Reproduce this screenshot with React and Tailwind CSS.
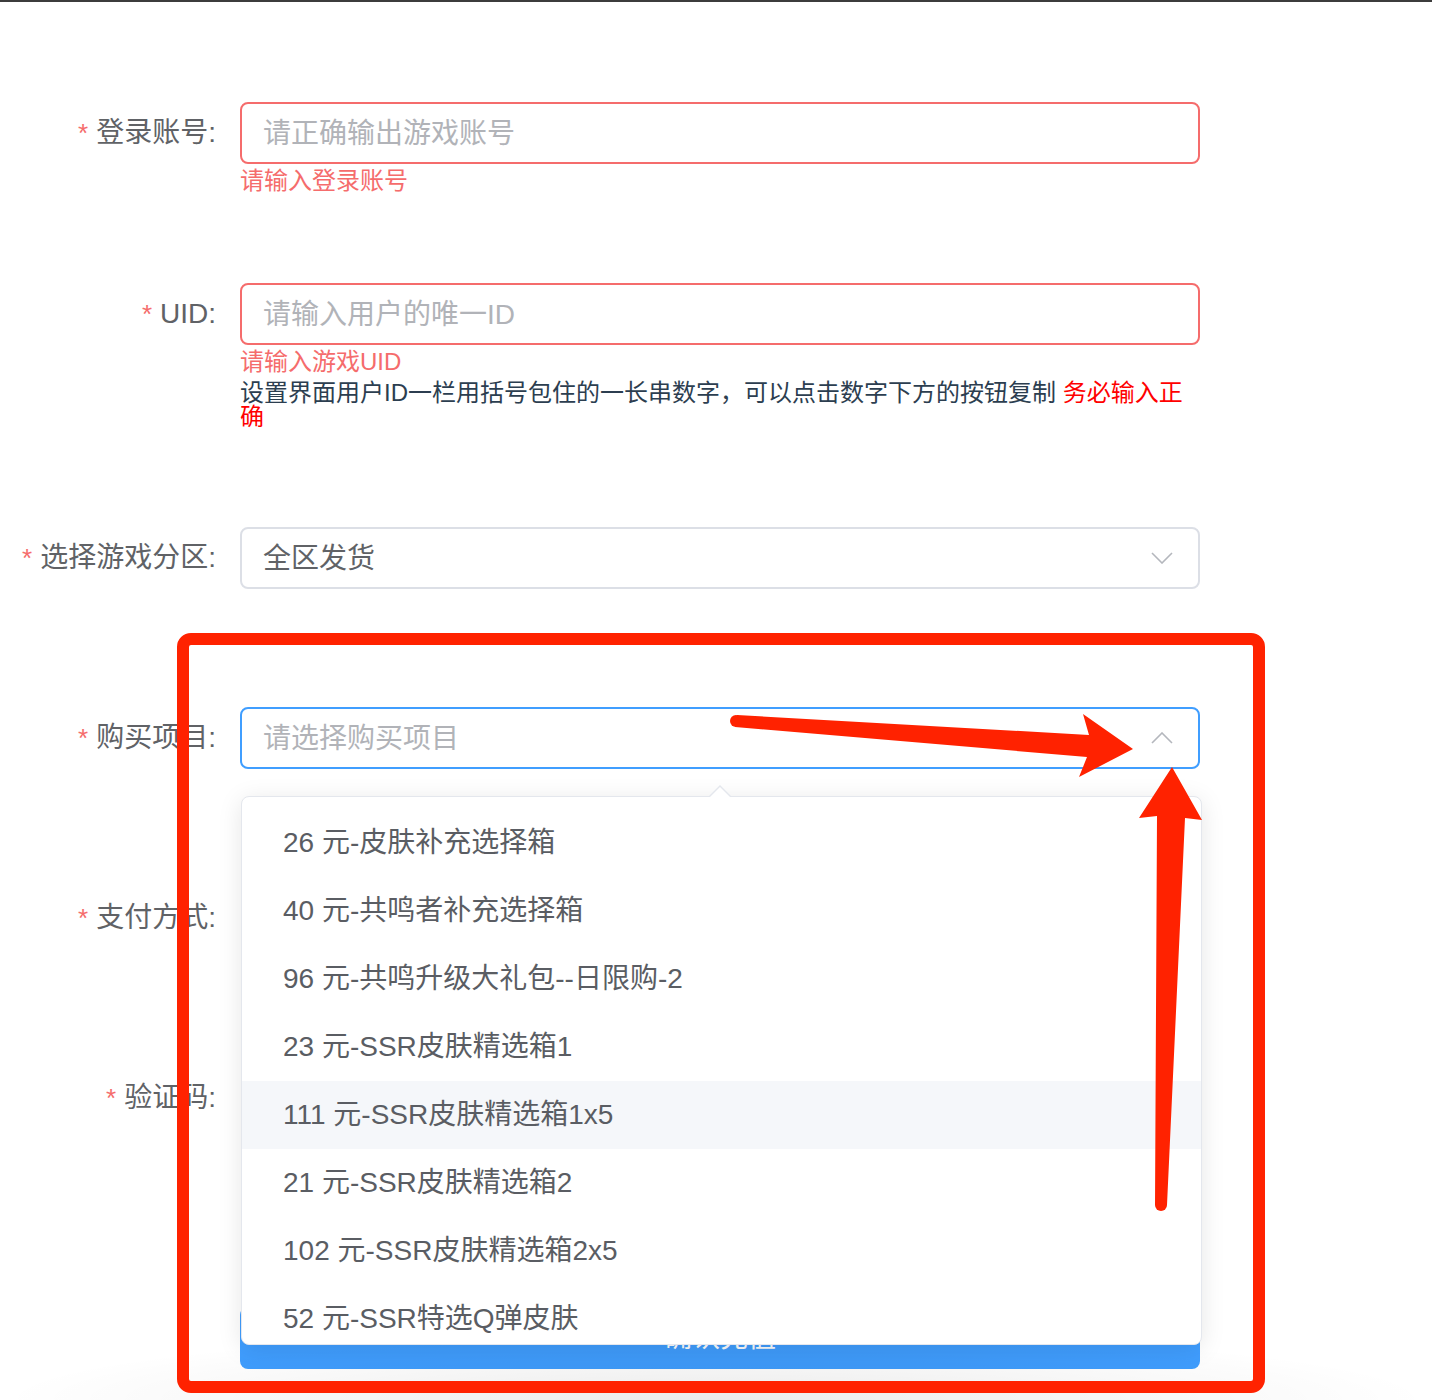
import React from 'react';

const options = [
  '26 元-皮肤补充选择箱',
  '40 元-共鸣者补充选择箱',
  '96 元-共鸣升级大礼包--日限购-2',
  '23 元-SSR皮肤精选箱1',
  '111 元-SSR皮肤精选箱1x5',
  '21 元-SSR皮肤精选箱2',
  '102 元-SSR皮肤精选箱2x5',
  '52 元-SSR特选Q弹皮肤',
];

function Label({ children }) {
  return (
    <label className="w-[240px] shrink-0 pr-[24px] text-right text-[28px] leading-[62px] text-[#606266] whitespace-nowrap">
      <span className="text-[#f56c6c] mr-[8px] text-[26px]">*</span>
      {children}
    </label>
  );
}

function Chevron({ up }) {
  return (
    <svg width="22" height="12" viewBox="0 0 22 12" className="absolute right-[25px] top-1/2 -translate-y-1/2">
      <polyline
        points={up ? '1,11 11,1 21,11' : '1,1 11,11 21,1'}
        fill="none"
        stroke="#b4b7bd"
        strokeWidth="1.6"
      />
    </svg>
  );
}

export default function App() {
  return (
    <div className="relative h-[1400px] bg-white overflow-hidden font-['Liberation_Sans','Noto_Sans_CJK_SC',sans-serif]">
      <div className="h-[2px] bg-[#3c3c3c]" />

      <form className="pt-[100px] w-[1200px]">
        {/* 登录账号 */}
        <div className="flex mb-[119px]">
          <Label>登录账号:</Label>
          <div className="relative w-[960px]">
            <div className="h-[62px] border-2 border-[#f56c6c] rounded-[8px] pl-[21px] pt-[2px] flex items-center text-[28px] text-[#b1b3b8]">
              请正确输出游戏账号
            </div>
            <div className="absolute left-0 top-full pt-[4px] text-[24px] leading-[26px] text-[#f56c6c]">请输入登录账号</div>
          </div>
        </div>

        {/* UID */}
        <div className="flex mb-[98px]">
          <Label>UID:</Label>
          <div className="w-[960px]">
            <div className="relative">
              <div className="h-[62px] border-2 border-[#f56c6c] rounded-[8px] pl-[21px] pt-[2px] flex items-center text-[28px] text-[#b1b3b8]">
                请输入用户的唯一ID
              </div>
              <div className="absolute left-0 top-full pt-[4px] text-[24px] leading-[26px] text-[#f56c6c]">请输入游戏UID</div>
            </div>
            <p className="mt-[36px] text-[24px] leading-[24px] text-[#2c3e50] whitespace-nowrap">
              设置界面用户ID一栏用括号包住的一长串数字，可以点击数字下方的按钮复制{' '}
              <span className="text-[#ff0000]">
                务必输入正
                <br />确
              </span>
            </p>
          </div>
        </div>

        {/* 选择游戏分区 */}
        <div className="flex mb-[118px]">
          <Label>选择游戏分区:</Label>
          <div className="relative w-[960px]">
            <div className="relative h-[62px] border-2 border-[#dcdfe6] rounded-[8px] pl-[21px] pt-[2px] flex items-center text-[28px] text-[#606266]">
              全区发货
              <Chevron />
            </div>
          </div>
        </div>

        {/* 购买项目 */}
        <div className="relative z-10 flex mb-[118px]">
          <Label>购买项目:</Label>
          <div className="relative w-[960px]">
            <div className="relative h-[62px] border-2 border-[#409eff] rounded-[8px] pl-[21px] pt-[2px] flex items-center text-[28px] text-[#b1b3b8]">
              请选择购买项目
              <Chevron up />
            </div>

            {/* dropdown */}
            <div className="absolute left-[1px] top-full mt-[27px] w-[961px]">
              <div className="absolute left-[468px] -top-[11px] w-0 h-0 border-x-[11px] border-x-transparent border-b-[11px] border-b-[#e4e7ed]" />
              <div className="absolute left-[469px] -top-[9px] w-0 h-0 border-x-[10px] border-x-transparent border-b-[10px] border-b-white" />
              <div className="h-[549px] overflow-hidden bg-white border border-[#e4e7ed] rounded-[8px] shadow-[0_4px_24px_0_rgba(0,0,0,0.1)] pt-[12px]">
                {options.map((o, i) => (
                  <div
                    key={o}
                    className={`h-[68px] pl-[41px] flex items-center text-[28px] text-[#5a5d63] whitespace-nowrap ${i === 4 ? 'bg-[#f5f7fa]' : ''}`}
                  >
                    {o}
                  </div>
                ))}
              </div>
            </div>
          </div>
        </div>

        {/* 支付方式 */}
        <div className="flex mb-[118px]">
          <Label>支付方式:</Label>
          <div className="w-[960px] h-[62px]" />
        </div>

        {/* 验证码 */}
        <div className="flex mb-[178px]">
          <Label>验证码:</Label>
          <div className="w-[960px] h-[62px]" />
        </div>

        <div className="flex">
          <div className="w-[240px] shrink-0" />
          <button type="button" className="w-[960px] h-[62px] rounded-[8px] bg-[#409eff] text-white text-[28px]">
            确认充值
          </button>
        </div>
      </form>

      {/* soft shadow at the bottom edge */}
      <div className="pointer-events-none absolute inset-x-0 bottom-0 h-[70px] bg-[radial-gradient(ellipse_50%_100%_at_50%_100%,rgba(0,0,0,0.08),transparent)]" />

      {/* annotation box */}
      <div className="pointer-events-none absolute z-20 left-[177px] top-[633px] w-[1088px] h-[760px] border-[12px] border-[#ff2200] rounded-[14px]" />

      {/* annotation arrows */}
      <svg className="pointer-events-none absolute z-20 left-0 top-0" width="1432" height="1400" viewBox="0 0 1432 1400">
        <polygon
          fill="#ff2200"
          points="737,715 1089,735 1083,714 1133,749 1079,777 1087,757 735,727"
        />
        <circle cx="736" cy="721" r="6" fill="#ff2200" />
        <polygon
          fill="#ff2200"
          points="1157,816 1139,818 1172,767 1202,820 1185,818 1167,1205 1155,1205"
        />
        <circle cx="1161" cy="1205" r="6" fill="#ff2200" />
      </svg>
    </div>
  );
}
